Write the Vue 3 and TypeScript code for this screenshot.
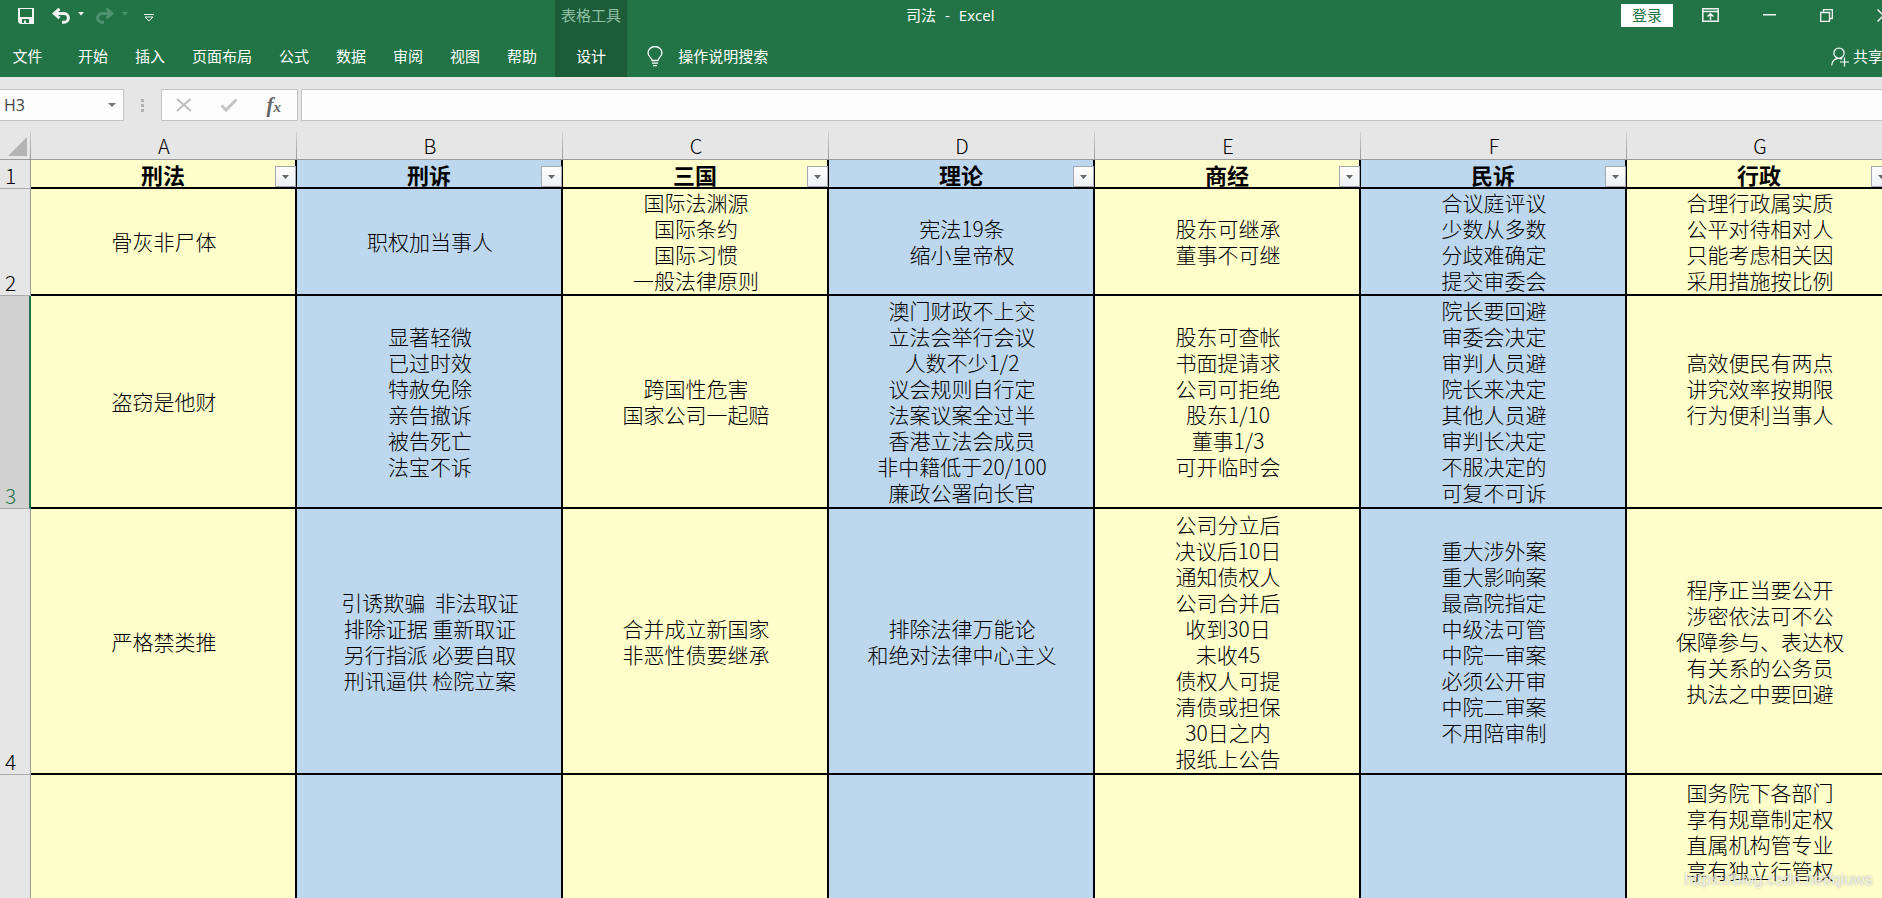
<script setup lang="ts">
import { ref } from 'vue'

interface Column {
  letter: string
  title: string
}

interface Row {
  index: number
  size: string
  cells: string[][]
}

const tabs: string[] = ['开始', '插入', '页面布局', '公式', '数据', '审阅', '视图', '帮助']

const columns: Column[] = [
  { letter: 'A', title: '刑法' },
  { letter: 'B', title: '刑诉' },
  { letter: 'C', title: '三国' },
  { letter: 'D', title: '理论' },
  { letter: 'E', title: '商经' },
  { letter: 'F', title: '民诉' },
  { letter: 'G', title: '行政' },
]

const rows: Row[] = [
  {
    index: 2,
    size: 'r2',
    cells: [
      ['骨灰非尸体'],
      ['职权加当事人'],
      ['国际法渊源', '国际条约', '国际习惯', '一般法律原则'],
      ['宪法19条', '缩小皇帝权'],
      ['股东可继承', '董事不可继'],
      ['合议庭评议', '少数从多数', '分歧难确定', '提交审委会'],
      ['合理行政属实质', '公平对待相对人', '只能考虑相关因', '采用措施按比例'],
    ],
  },
  {
    index: 3,
    size: 'r3',
    cells: [
      ['盗窃是他财'],
      ['显著轻微', '已过时效', '特赦免除', '亲告撤诉', '被告死亡', '法宝不诉'],
      ['跨国性危害', '国家公司一起赔'],
      ['澳门财政不上交', '立法会举行会议', '人数不少1/2', '议会规则自行定', '法案议案全过半', '香港立法会成员', '非中籍低于20/100', '廉政公署向长官'],
      ['股东可查帐', '书面提请求', '公司可拒绝', '股东1/10', '董事1/3', '可开临时会'],
      ['院长要回避', '审委会决定', '审判人员避', '院长来决定', '其他人员避', '审判长决定', '不服决定的', '可复不可诉'],
      ['高效便民有两点', '讲究效率按期限', '行为便利当事人', ''],
    ],
  },
  {
    index: 4,
    size: 'r4',
    cells: [
      ['严格禁类推'],
      ['引诱欺骗  非法取证', '排除证据 重新取证', '另行指派 必要自取', '刑讯逼供 检院立案'],
      ['合并成立新国家', '非恶性债要继承'],
      ['排除法律万能论', '和绝对法律中心主义'],
      ['公司分立后', '决议后10日', '通知债权人', '公司合并后', '收到30日', '未收45', '债权人可提', '清债或担保', '30日之内', '报纸上公告'],
      ['重大涉外案', '重大影响案', '最高院指定', '中级法可管', '中院一审案', '必须公开审', '中院二审案', '不用陪审制'],
      ['程序正当要公开', '涉密依法可不公', '保障参与、表达权', '有关系的公务员', '执法之中要回避'],
    ],
  },
  {
    index: 5,
    size: 'r5',
    cells: [[], [], [], [], [], [], ['国务院下各部门', '享有规章制定权', '直属机构管专业', '享有独立行管权', '', '']],
  },
]

const activeRow = ref<number>(3)
const nameBox = ref<string>('H3')
const formula = ref<string>('')
</script>

<template>
  <div class="excel">
    <header class="ribbon">
      <div class="title-row">
        <div class="quick">
          <button class="icon-btn save" type="button" aria-label="保存">
            <svg width="16" height="16" viewBox="0 0 16 16"><path fill="#f3f3f3" fill-rule="evenodd" d="M0 0H16V16H2L0 14ZM2 1V9H14V1ZM4 11V15H6V12.500H8V15H11V11Z" /></svg>
          </button>
          <button class="icon-btn undo" type="button" aria-label="撤消">
            <svg width="18" height="16" viewBox="0 0 18 16"><path fill="none" stroke="#f3f3f3" stroke-width="3" d="M2 5.500H12A4.400 4.400 0 0 1 12 14.300H10M7.500 .8L2.200 5.500L7.500 10.200" /></svg>
          </button>
          <button class="icon-btn drop" type="button" aria-label="撤消列表">
            <svg width="6" height="4" viewBox="0 0 6 4"><path fill="#f3f3f3" d="M0 0H6L3 3.500Z" /></svg>
          </button>
          <button class="icon-btn redo" type="button" aria-label="恢复" disabled>
            <svg width="18" height="16" viewBox="0 0 18 16"><path fill="none" stroke="#4f9370" stroke-width="3" d="M16 5.500H6A4.400 4.400 0 0 0 6 14.300H8M10.500 .8L15.800 5.500L10.500 10.200" /></svg>
          </button>
          <button class="icon-btn drop" type="button" aria-label="恢复列表" disabled>
            <svg width="6" height="4" viewBox="0 0 6 4"><path fill="#4f9370" d="M0 0H6L3 3.500Z" /></svg>
          </button>
          <button class="icon-btn custom" type="button" aria-label="自定义快速访问工具栏">
            <svg width="10" height="8" viewBox="0 0 10 8"><path fill="none" stroke="#f3f3f3" d="M0 .5H10M1 3L5 7L9 3Z" /></svg>
          </button>
        </div>
        <div class="context-title">表格工具</div>
        <h1 class="doc-title"><span>司法</span><span>-</span><span>Excel</span></h1>
        <div class="window-controls">
          <button class="login" type="button">登录</button>
          <button class="icon-btn" type="button" aria-label="功能区显示选项">
            <svg width="17" height="14" viewBox="0 0 17 14"><path fill="none" stroke="#f3f3f3" stroke-width="1.500" d="M.8 .8H16.200V13.200H.8ZM.8 3.500H16.200M8.500 12V6M5.500 8.500L8.500 5.800L11.500 8.500" /></svg>
          </button>
          <button class="icon-btn" type="button" aria-label="最小化">
            <svg width="13" height="2" viewBox="0 0 13 2"><path fill="#f3f3f3" d="M0 0H13V1.500H0Z" /></svg>
          </button>
          <button class="icon-btn" type="button" aria-label="向下还原">
            <svg width="13" height="13" viewBox="0 0 13 13"><path fill="none" stroke="#f3f3f3" stroke-width="1.300" d="M.7 3.500H9.500V12.300H.7ZM3.500 3.500V.7H12.300V9.500H9.500" /></svg>
          </button>
          <button class="icon-btn" type="button" aria-label="关闭">
            <svg width="13" height="13" viewBox="0 0 13 13"><path fill="none" stroke="#f3f3f3" stroke-width="1.500" d="M.5 .5L12.500 12.500M12.500 .5L.5 12.500" /></svg>
          </button>
        </div>
      </div>
      <nav class="tab-row" aria-label="功能区">
        <button class="file" type="button">文件</button>
        <button v-for="tab in tabs" :key="tab" class="tab" type="button">{{ tab }}</button>
        <button class="tab design" type="button">设计</button>
        <button class="tell-me" type="button">
          <svg width="16" height="21" viewBox="0 0 16 21"><path fill="none" stroke="#fff" stroke-width="1.300" d="M5 14.500C5 11.500 1 11 1 6.800A7 6.200 0 0 1 15 6.800C15 11 11 11.500 11 14.500ZM5 17.200H11M6 19.700H10" /></svg>
          <span>操作说明搜索</span>
        </button>
        <button class="share" type="button">
          <svg width="18" height="20" viewBox="0 0 18 20"><path fill="none" stroke="#fff" stroke-width="1.200" d="M8 1A5 5 0 0 1 8 11.300A5 5 0 0 1 8 1ZM.7 18.500C.7 14 4 11.300 7.500 11.300Q9.500 11.300 11 12.200M13.500 10.500V19.500M9 15H18" /></svg>
          <span>共享</span>
        </button>
      </nav>
    </header>

    <section class="formula-bar" aria-label="编辑栏">
      <div class="name-box">
        <input v-model="nameBox" type="text" aria-label="名称框" />
        <button class="icon-btn" type="button" aria-label="名称列表">
          <svg width="8" height="4" viewBox="0 0 8 4"><path fill="#777" d="M0 0H8L4 4Z" /></svg>
        </button>
      </div>
      <div class="grip"><i></i><i></i><i></i></div>
      <div class="fx-box">
        <button class="icon-btn" type="button" aria-label="取消">
          <svg width="16" height="14" viewBox="0 0 16 14"><path fill="none" stroke="#bdbdbd" stroke-width="2" d="M1 1L15 13M14.500 1L1 13" /></svg>
        </button>
        <button class="icon-btn" type="button" aria-label="输入">
          <svg width="18" height="14" viewBox="0 0 18 14"><path fill="none" stroke="#c4c4c4" stroke-width="3" d="M1.500 7.500L6 12L16.500 1.500" /></svg>
        </button>
        <button class="icon-btn fx" type="button" aria-label="插入函数"><span class="f">f</span><span class="x">x</span></button>
      </div>
      <input v-model="formula" class="formula" type="text" aria-label="编辑公式" />
    </section>

    <main class="sheet">
      <table>
        <colgroup>
          <col class="c-head" />
          <col v-for="c in columns" :key="c.letter" class="c-data" />
        </colgroup>
        <thead>
          <tr class="letters">
            <th class="corner" aria-label="全选">
              <svg width="19" height="19" viewBox="0 0 19 19"><path fill="#b4b4b4" d="M19 0V19H0Z" /></svg>
            </th>
            <th v-for="c in columns" :key="c.letter" scope="col">{{ c.letter }}</th>
          </tr>
        </thead>
        <tbody>
          <tr class="r1">
            <th class="row-head" scope="row">1</th>
            <th v-for="c in columns" :key="c.title" class="cell heading" scope="col">
              {{ c.title }}
              <button class="filter" type="button" :aria-label="'筛选' + c.title">
                <svg width="7" height="4" viewBox="0 0 7 4"><path fill="#666" d="M0 0H7L3.500 4Z" /></svg>
              </button>
            </th>
          </tr>
          <tr v-for="r in rows" :key="r.index" :class="r.size">
            <th class="row-head" :class="{ active: r.index === activeRow }" scope="row">{{ r.index }}</th>
            <td v-for="(lines, i) in r.cells" :key="i" class="cell">
              <div v-for="(line, n) in lines" :key="n" class="line">{{ line }}</div>
            </td>
          </tr>
        </tbody>
      </table>
      <div class="watermark">https://blog.csdn.net/qiuws</div>
    </main>
  </div>
</template>

<style>
body {
  margin: 0;
  overflow: hidden;
}
</style>

<style scoped>
.excel {
  height: 100vh;
  display: flex;
  flex-direction: column;
  overflow: hidden;
  background: #e6e6e6;
  font-family: "Open Sans", "Noto Sans CJK SC", sans-serif;
  font-size: 15px;
}
button,
input {
  font: inherit;
  color: inherit;
  margin: 0;
  padding: 0;
  border: 0;
  background: none;
  border-radius: 0;
}
svg {
  display: block;
  flex: none;
}
.icon-btn {
  display: flex;
  align-items: center;
  justify-content: center;
}
.ribbon {
  flex: none;
  background: #227447;
  color: #fff;
}
.title-row {
  display: flex;
  height: 36px;
}
.quick {
  box-sizing: border-box;
  display: flex;
  align-items: center;
  width: 555px;
  height: 32px;
  padding-left: 18px;
  flex: none;
}
.undo {
  margin-left: 18px;
}
.drop {
  margin: 0 0 4px 8px;
}
.redo {
  margin-left: 12px;
}
.custom {
  margin: 4px 0 0 16px;
}
.context-title {
  width: 72px;
  height: 36px;
  line-height: 30px;
  text-align: center;
  background: #1c5c39;
  color: #8fc0a4;
  flex: none;
}
.doc-title {
  display: flex;
  gap: 9px;
  flex: 1;
  margin: 0;
  padding-left: 279px;
  font-size: 15px;
  font-weight: 400;
  line-height: 30px;
}
.window-controls {
  display: flex;
  align-items: center;
  height: 30px;
  gap: 44px;
  margin-right: -8px;
  flex: none;
}
.login {
  width: 52px;
  height: 23px;
  line-height: 23px;
  background: #fff;
  color: #227447;
  margin-right: -15px;
}
.tab-row {
  display: flex;
  height: 41px;
  line-height: 41px;
  overflow: hidden;
}
.file {
  width: 55px;
  margin-right: 9px;
}
.tab {
  padding: 0 13px 0 14px;
}
.design {
  width: 72px;
  padding: 0;
  margin-left: 5px;
  background: #1c5c39;
}
.tell-me {
  display: flex;
  align-items: center;
  gap: 15px;
  margin-left: 20px;
}
.share {
  display: flex;
  align-items: center;
  gap: 4px;
  margin-left: auto;
  margin-right: -1px;
}
.formula-bar {
  display: flex;
  flex: none;
  height: 32px;
  padding: 12px 0 8px;
}
.name-box,
.fx-box,
.formula {
  box-sizing: border-box;
  height: 32px;
  border: 1px solid #c3c3c3;
  background: #fdfdfd;
}
.name-box {
  display: flex;
  width: 124px;
  border-left: 0;
  padding: 0 7px 0 4px;
}
.name-box input {
  flex: 1;
  min-width: 0;
  font-size: 16px;
  color: #444;
}
.grip {
  display: flex;
  flex-direction: column;
  justify-content: center;
  gap: 2px;
  width: 37px;
  align-items: center;
}
.grip i {
  width: 3px;
  height: 3px;
  background: #b2b2b2;
}
.fx-box {
  display: flex;
  justify-content: space-between;
  align-items: center;
  width: 137px;
  padding: 0 16px 0 14px;
}
.fx {
  font-family: "Liberation Serif", serif;
  font-style: italic;
  font-weight: 700;
  color: #666;
  align-items: baseline;
}
.f {
  font-size: 21px;
  line-height: 24px;
}
.x {
  font-size: 15px;
}
.formula {
  flex: 1;
  min-width: 0;
  margin-left: 3px;
  border-right: 0;
  padding: 0 6px;
}
.sheet {
  position: relative;
  flex: 1;
  min-height: 0;
  overflow: hidden;
}
table {
  table-layout: fixed;
  width: 1893px;
  border-collapse: separate;
  border-spacing: 0;
  font-family: "Noto Sans CJK SC", sans-serif;
  font-size: 21px;
  font-weight: 300;
  line-height: 26px;
  color: #000;
}
.c-head {
  width: 31px;
}
.c-data {
  width: 266px;
}
th,
td {
  box-sizing: border-box;
  padding: 0;
  font-weight: 300;
  text-align: center;
  vertical-align: middle;
}
.letters th {
  height: 31px;
  padding-top: 4px;
  font-size: 20px;
  border-bottom: 1px solid #9b9b9b;
  background: linear-gradient(#d0d0d0, #999) right bottom / 1px 27px no-repeat;
}
.letters .corner svg {
  margin-left: 8px;
}
.row-head {
  border-right: 1px solid #9b9b9b;
  border-bottom: 1px solid #ababab;
  padding-right: 9px;
  vertical-align: bottom;
}
.row-head.active {
  background: #d2d2d2;
  color: #227447;
  border-right: 2px solid #227447;
  padding-right: 8px;
}
.cell {
  padding-left: 2px;
  border-right: 2px solid #000;
  border-bottom: 2px solid #000;
  background: #ffc;
}
.cell:nth-child(odd) {
  background: #bdd7ee;
}
.heading {
  position: relative;
  padding-left: 0;
  font-size: 22px;
  font-weight: 700;
}
.filter {
  position: absolute;
  right: -1px;
  bottom: 0;
  box-sizing: border-box;
  display: flex;
  align-items: center;
  justify-content: center;
  width: 21px;
  height: 21px;
  border: 1px solid #a6a9b2;
  background: linear-gradient(#fff, #eeeff5);
}
.line {
  height: 26px;
  white-space: pre;
}
.r1 th {
  height: 29px;
}
.r2 th {
  height: 107px;
}
.r2 td,
.r3 td {
  padding-bottom: 1px;
}
.r3 th {
  height: 213px;
}
.r4 th {
  height: 266px;
}
.r5 th {
  height: 166px;
}
.watermark {
  position: absolute;
  right: 9px;
  bottom: 7px;
  font-family: "Liberation Sans", sans-serif;
  font-size: 16px;
  line-height: 22px;
  color: rgba(255, 255, 255, 0.75);
  text-shadow: 0 0 2px rgba(100, 100, 100, 0.6);
  pointer-events: none;
}
</style>
